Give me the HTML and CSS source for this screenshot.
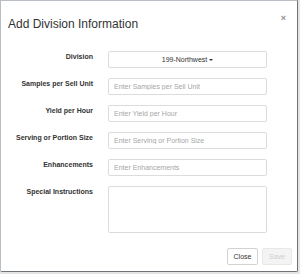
FILE: index.html
```html
<!DOCTYPE html>
<html>
<head>
<meta charset="utf-8">
<link rel="stylesheet" href="styles.css">
</head>
<body>
<div class="modal">
  <div class="modal-header">
    <h4 class="title">Add Division Information</h4>
    <span class="close">&times;</span>
  </div>
  <form class="form">
    <label class="label">Division</label>
    <button type="button" class="dropdown">199-Northwest <span class="caret"></span></button>
    <label class="label">Samples per Sell Unit</label>
    <input class="input" placeholder="Enter Samples per Sell Unit">
    <label class="label">Yield per Hour</label>
    <input class="input" placeholder="Enter Yield per Hour">
    <label class="label">Serving or Portion Size</label>
    <input class="input" placeholder="Enter Serving or Portion Size">
    <label class="label">Enhancements</label>
    <input class="input" placeholder="Enter Enhancements">
    <label class="label">Special Instructions</label>
    <textarea class="textarea"></textarea>
  </form>
  <div class="footer">
    <button type="button" class="btn">Close</button>
    <button type="button" class="btn disabled">Save</button>
  </div>
</div>
</body>
</html>
```
FILE: styles.css
```css
html, body {
  margin: 0;
  padding: 0;
}
body {
  background: #e4e4e4;
  width: 300px;
  height: 274px;
  font-family: "Liberation Sans", Arial, sans-serif;
  color: #333;
}
.modal {
  box-sizing: border-box;
  width: 298px;
  height: 272px;
  background: #fff;
  border: 1px solid #b9bec4;
  border-right-color: #6f7378;
  border-bottom-color: #6f7378;
  border-radius: 0 0 2px 2px;
  display: flex;
  flex-direction: column;
}
.modal-header {
  display: flex;
  justify-content: space-between;
  align-items: flex-start;
  padding: 16px 11px 0 7px;
}
.title {
  margin: 0;
  font-size: 12px;
  line-height: 14px;
  font-weight: normal;
  color: #333;
}
.close {
  font-size: 9px;
  line-height: 9px;
  font-weight: bold;
  color: #000;
  opacity: 0.45;
  margin-top: -3px;
}
.form {
  margin: 20px 0 0 0;
  display: grid;
  grid-template-columns: 92px 159px;
  column-gap: 15px;
  row-gap: 10px;
}
.label {
  text-align: right;
  font-weight: bold;
  font-size: 7px;
  line-height: 9px;
  padding-top: 1px;
  color: #333;
}
.dropdown, .input, .textarea {
  box-sizing: border-box;
  width: 159px;
  height: 17px;
  border: 1px solid #dcdcdc;
  border-radius: 2px;
  background: #fff;
  margin: 0;
  font-family: "Liberation Sans", Arial, sans-serif;
  font-size: 7px;
  color: #333;
  outline: none;
}
.dropdown {
  display: flex;
  justify-content: center;
  align-items: center;
  padding: 0;
  gap: 2px;
}
.caret {
  width: 0;
  height: 0;
  border-left: 2px solid transparent;
  border-right: 2px solid transparent;
  border-top: 2px solid #333;
}
.input {
  padding: 0 5px;
}
.input::placeholder {
  color: #a6a6a6;
}
.textarea {
  height: 47px;
  resize: none;
  padding: 3px 5px;
}
.footer {
  display: flex;
  justify-content: flex-end;
  gap: 4px;
  padding: 15px 5px 0 0;
}
.btn {
  box-sizing: border-box;
  height: 17px;
  width: 31px;
  padding: 0;
  margin: 0;
  border: 1px solid #d2d2d2;
  border-radius: 2px;
  background: #fff;
  font-family: "Liberation Sans", Arial, sans-serif;
  font-size: 7px;
  color: #333;
}
.btn.disabled {
  width: 30px;
  background: #f4f4f4;
  border-color: #e8e8e8;
  color: #cfcfcf;
}
```
